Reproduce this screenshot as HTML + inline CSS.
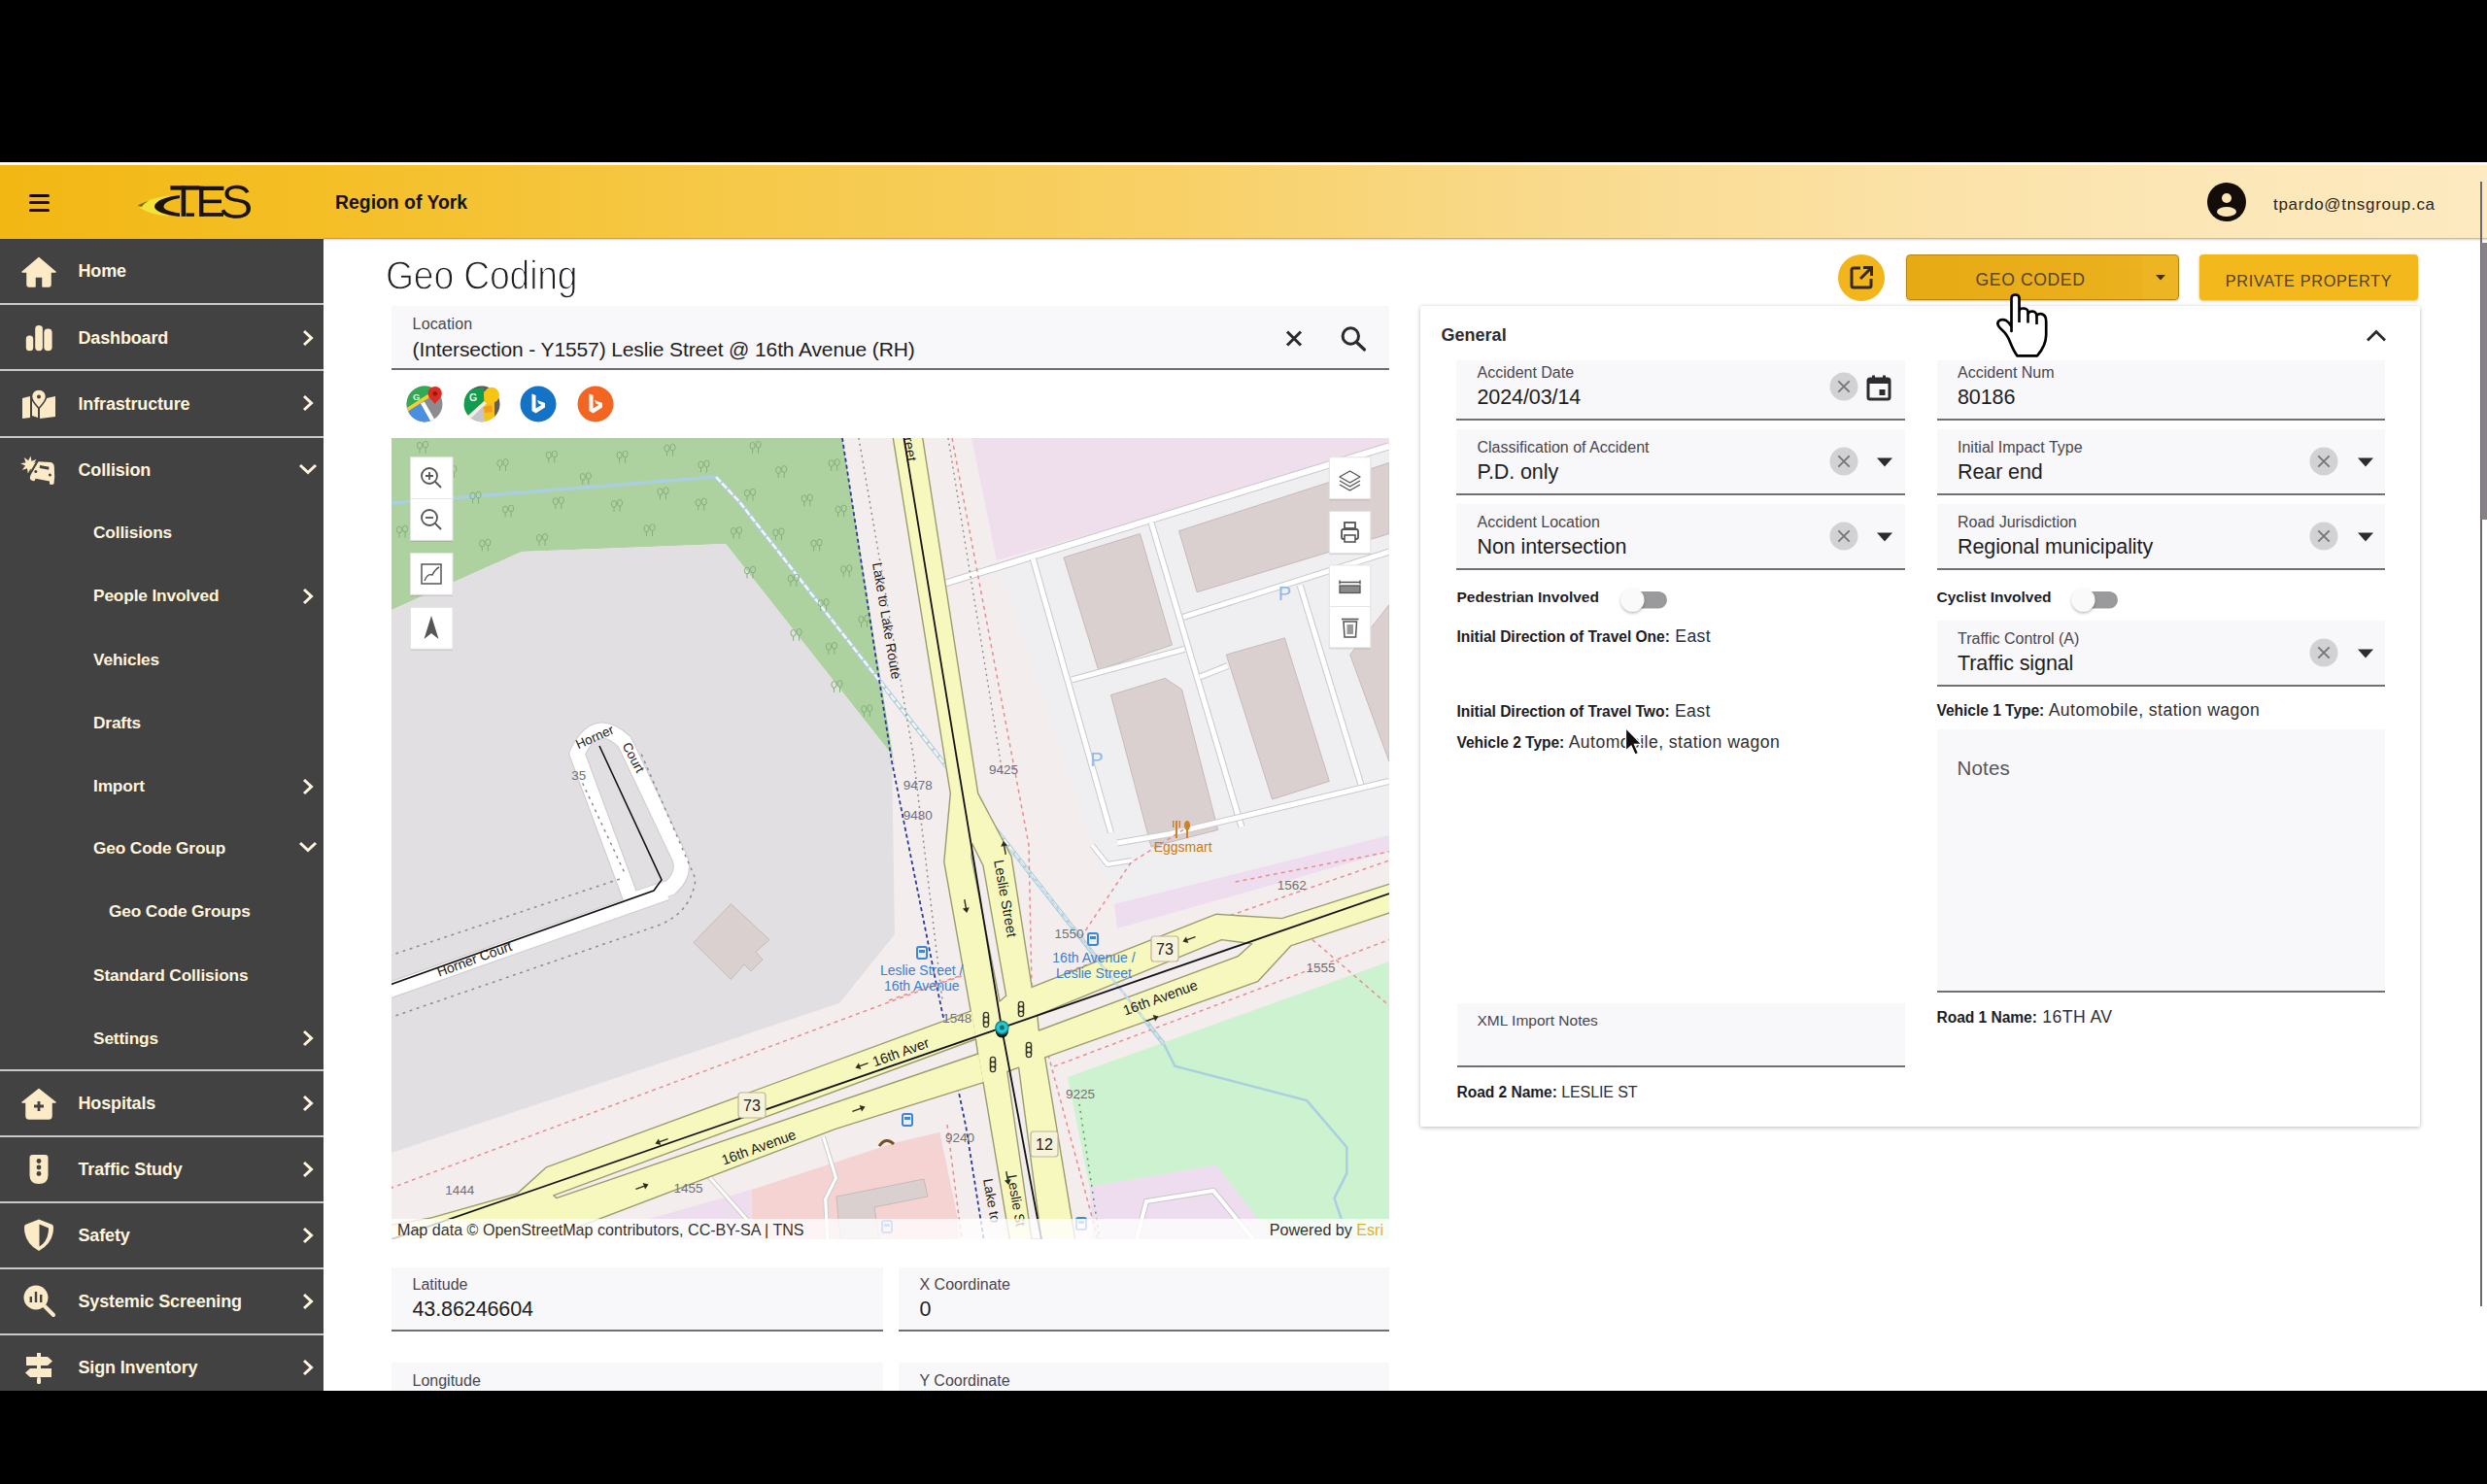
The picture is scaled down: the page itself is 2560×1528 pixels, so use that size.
<!DOCTYPE html>
<html><head><meta charset="utf-8"><title>Geo Coding</title>
<style>
html,body{margin:0;padding:0;}
body{width:2560px;height:1528px;background:#000;position:relative;overflow:hidden;font-family:"Liberation Sans", sans-serif;}
.t{position:absolute;white-space:nowrap;}
.b{position:absolute;}
</style></head><body>
<div class="b" style="left:0px;top:167px;width:2560px;height:3px;background:#fbfbfb"></div><div class="b" style="left:0px;top:170px;width:2560px;height:76px;background:linear-gradient(90deg,#F2B713 0%,#F4BE24 12%,#F6C94A 30%,#F8D066 47%,#F9DA8C 62%,#FBE2A8 78%,#FCE7B8 90%,#FDEAC0 100%);box-shadow:0 2px 3px rgba(0,0,0,0.25)"></div><div class="b" style="left:333px;top:246px;width:2227px;height:1186px;background:#ffffff"></div><div class="b" style="left:333px;top:245px;width:2227px;height:4px;background:linear-gradient(rgba(90,80,60,0.35),rgba(120,110,140,0.06) 70%,rgba(255,255,255,0))"></div><div class="b" style="left:29.5px;top:199.5px;width:21px;height:3px;background:#1a0a00;border-radius:2px"></div><div class="b" style="left:29.5px;top:207px;width:21px;height:3px;background:#1a0a00;border-radius:2px"></div><div class="b" style="left:29.5px;top:214.5px;width:21px;height:3px;background:#1a0a00;border-radius:2px"></div><svg class="b" style="left:138px;top:186px" width="124" height="44" viewBox="0 0 124 44">
<path d="M4 26 C12 20 26 16 40 15.5 C30 19 24 23 22 27 C22 31 28 34 38 36.5 C22 36 10 32 4 26 Z" fill="#F3E23A"/>
<path d="M3.5 26 C7 23.5 11 22 15 21 C11 23 9 25 8 27 Z" fill="#7a6a18"/>
<path d="M47 15 C33 16.5 22 20.5 21 26.5 C21 31 30 35 47 37 L47 33.5 C37 32 30.5 30 30.5 27 C30.5 23 37 19.5 47 18 Z" fill="#1a1410"/>
<rect x="37.4" y="5.2" width="30" height="4.4" fill="#1a1410"/>
<rect x="48.6" y="5.2" width="4.6" height="31.6" fill="#1a1410"/>
<rect x="53.5" y="33.4" width="8.5" height="3.4" fill="#1a1410"/>
<rect x="67" y="5.8" width="4.4" height="31" fill="#1a1410"/>
<rect x="67" y="5.8" width="25.4" height="4.2" fill="#1a1410"/>
<rect x="67" y="19.6" width="23" height="3.6" fill="#1a1410"/>
<rect x="67" y="33" width="25" height="3.8" fill="#1a1410"/>
<path d="M118.5 11.5 C116 6.5 111 4.8 105.5 4.8 C98 4.8 93.5 8.5 93.5 13.5 C93.5 19 98.5 20.8 105.5 21.8 C112 22.8 115.6 24.5 115.6 29 C115.6 33.5 111.5 35.3 105.5 35.3 C99 35.3 94.8 33.2 93 29.5 L89.6 31 C92 36.3 97.5 38.8 105.5 38.8 C114 38.8 120 35 120 28.8 C120 22 114.5 19.6 106.5 18.5 C100 17.6 97.5 16.4 97.5 13.2 C97.5 9.9 100.5 8.3 105.3 8.3 C110 8.3 113 9.8 115 13 Z" fill="#1a1410"/>
</svg><div class="t" style="left:345.0px;top:199.4px;font-size:19.4px;line-height:19.4px;font-weight:bold;color:#161210;">Region of York</div><svg class="b" style="left:2271px;top:187px" width="42" height="42" viewBox="0 0 42 42">
<circle cx="21" cy="21" r="20" fill="#140c08"/>
<circle cx="21" cy="17" r="5" fill="#FCE6B5"/>
<ellipse cx="21" cy="31" rx="10" ry="5" fill="#FCE6B5"/>
</svg><div class="t" style="left:2340.0px;top:202.1px;font-size:17px;line-height:17px;font-weight:normal;color:#2a2420;letter-spacing:0.69px">tpardo@tnsgroup.ca</div><div class="b" style="left:2553px;top:187px;width:2px;height:1158px;background:#6d6a6d"></div><div class="b" style="left:2554px;top:250px;width:6px;height:285px;background:#878187"></div><div class="b" style="left:0px;top:246px;width:333px;height:1186px;background:#424242"></div><div class="b" style="left:0px;top:312px;width:333px;height:2px;background:#c9c9c9"></div><div class="b" style="left:0px;top:380px;width:333px;height:2px;background:#c9c9c9"></div><div class="b" style="left:0px;top:449px;width:333px;height:2px;background:#c9c9c9"></div><div class="b" style="left:0px;top:1101px;width:333px;height:2px;background:#c9c9c9"></div><div class="b" style="left:0px;top:1169px;width:333px;height:2px;background:#c9c9c9"></div><div class="b" style="left:0px;top:1237px;width:333px;height:2px;background:#c9c9c9"></div><div class="b" style="left:0px;top:1305px;width:333px;height:2px;background:#c9c9c9"></div><div class="b" style="left:0px;top:1373px;width:333px;height:2px;background:#c9c9c9"></div><div class="t" style="left:80.5px;top:270.4px;font-size:18px;line-height:18px;font-weight:bold;color:#FFF5DC;letter-spacing:-0.15px">Home</div><div class="t" style="left:80.5px;top:339.4px;font-size:18px;line-height:18px;font-weight:bold;color:#FFF5DC;letter-spacing:-0.15px">Dashboard</div><div class="t" style="left:80.5px;top:406.7px;font-size:18px;line-height:18px;font-weight:bold;color:#FFF5DC;letter-spacing:-0.15px">Infrastructure</div><div class="t" style="left:80.5px;top:474.8px;font-size:18px;line-height:18px;font-weight:bold;color:#FFF5DC;letter-spacing:-0.15px">Collision</div><div class="t" style="left:80.5px;top:1127.4px;font-size:18px;line-height:18px;font-weight:bold;color:#FFF5DC;letter-spacing:-0.15px">Hospitals</div><div class="t" style="left:80.5px;top:1195.3px;font-size:18px;line-height:18px;font-weight:bold;color:#FFF5DC;letter-spacing:-0.15px">Traffic Study</div><div class="t" style="left:80.5px;top:1263.2px;font-size:18px;line-height:18px;font-weight:bold;color:#FFF5DC;letter-spacing:-0.15px">Safety</div><div class="t" style="left:80.5px;top:1331.0px;font-size:18px;line-height:18px;font-weight:bold;color:#FFF5DC;letter-spacing:-0.15px">Systemic Screening</div><div class="t" style="left:80.5px;top:1398.8px;font-size:18px;line-height:18px;font-weight:bold;color:#FFF5DC;letter-spacing:-0.15px">Sign Inventory</div><div class="t" style="left:96.0px;top:540.4px;font-size:17.3px;line-height:17.3px;font-weight:bold;color:#FFF5DC;letter-spacing:-0.15px">Collisions</div><div class="t" style="left:96.0px;top:605.4px;font-size:17.3px;line-height:17.3px;font-weight:bold;color:#FFF5DC;letter-spacing:-0.15px">People Involved</div><div class="t" style="left:96.0px;top:670.8px;font-size:17.3px;line-height:17.3px;font-weight:bold;color:#FFF5DC;letter-spacing:-0.15px">Vehicles</div><div class="t" style="left:96.0px;top:736.1px;font-size:17.3px;line-height:17.3px;font-weight:bold;color:#FFF5DC;letter-spacing:-0.15px">Drafts</div><div class="t" style="left:96.0px;top:801.4px;font-size:17.3px;line-height:17.3px;font-weight:bold;color:#FFF5DC;letter-spacing:-0.15px">Import</div><div class="t" style="left:96.0px;top:864.6px;font-size:17.3px;line-height:17.3px;font-weight:bold;color:#FFF5DC;letter-spacing:-0.15px">Geo Code Group</div><div class="t" style="left:112.0px;top:930.2px;font-size:17.3px;line-height:17.3px;font-weight:bold;color:#FFF5DC;letter-spacing:-0.15px">Geo Code Groups</div><div class="t" style="left:96.0px;top:996.0px;font-size:17.3px;line-height:17.3px;font-weight:bold;color:#FFF5DC;letter-spacing:-0.15px">Standard Collisions</div><div class="t" style="left:96.0px;top:1060.7px;font-size:17.3px;line-height:17.3px;font-weight:bold;color:#FFF5DC;letter-spacing:-0.15px">Settings</div><svg class="b" style="left:309px;top:338.1px" width="16" height="20" viewBox="0 0 16 20"><path d="M4 3 L11.5 10 L4 17" fill="none" stroke="#FFF5DC" stroke-width="3"/></svg><svg class="b" style="left:309px;top:405.4px" width="16" height="20" viewBox="0 0 16 20"><path d="M4 3 L11.5 10 L4 17" fill="none" stroke="#FFF5DC" stroke-width="3"/></svg><svg class="b" style="left:306px;top:475.0px" width="22" height="16" viewBox="0 0 22 16"><path d="M3 4 L11 11.5 L19 4" fill="none" stroke="#FFF5DC" stroke-width="3"/></svg><svg class="b" style="left:309px;top:1126.1px" width="16" height="20" viewBox="0 0 16 20"><path d="M4 3 L11.5 10 L4 17" fill="none" stroke="#FFF5DC" stroke-width="3"/></svg><svg class="b" style="left:309px;top:1194.0px" width="16" height="20" viewBox="0 0 16 20"><path d="M4 3 L11.5 10 L4 17" fill="none" stroke="#FFF5DC" stroke-width="3"/></svg><svg class="b" style="left:309px;top:1261.9px" width="16" height="20" viewBox="0 0 16 20"><path d="M4 3 L11.5 10 L4 17" fill="none" stroke="#FFF5DC" stroke-width="3"/></svg><svg class="b" style="left:309px;top:1329.7px" width="16" height="20" viewBox="0 0 16 20"><path d="M4 3 L11.5 10 L4 17" fill="none" stroke="#FFF5DC" stroke-width="3"/></svg><svg class="b" style="left:309px;top:1397.5px" width="16" height="20" viewBox="0 0 16 20"><path d="M4 3 L11.5 10 L4 17" fill="none" stroke="#FFF5DC" stroke-width="3"/></svg><svg class="b" style="left:309px;top:603.5px" width="16" height="20" viewBox="0 0 16 20"><path d="M4 3 L11.5 10 L4 17" fill="none" stroke="#FFF5DC" stroke-width="3"/></svg><svg class="b" style="left:309px;top:799.5px" width="16" height="20" viewBox="0 0 16 20"><path d="M4 3 L11.5 10 L4 17" fill="none" stroke="#FFF5DC" stroke-width="3"/></svg><svg class="b" style="left:306px;top:864.2px" width="22" height="16" viewBox="0 0 22 16"><path d="M3 4 L11 11.5 L19 4" fill="none" stroke="#FFF5DC" stroke-width="3"/></svg><svg class="b" style="left:309px;top:1058.8px" width="16" height="20" viewBox="0 0 16 20"><path d="M4 3 L11.5 10 L4 17" fill="none" stroke="#FFF5DC" stroke-width="3"/></svg><svg class="b" style="left:22px;top:264px" width="36" height="32" viewBox="0 0 36 32"><path d="M18 1.5 L35 16 L30 16 L30 29 Q30 31 28 31 L22 31 L22 21 L14 21 L14 31 L8 31 Q6 31 6 29 L6 16 L1 16 Z" fill="#FCEBC6" stroke="#FCEBC6" stroke-width="1.5" stroke-linejoin="round"/></svg><svg class="b" style="left:26px;top:334px" width="29" height="28" viewBox="0 0 29 28"><rect x="0.8" y="11.6" width="7.4" height="15.6" rx="3.5" fill="#FCEBC6"/><rect x="10.2" y="1" width="7.7" height="26.2" rx="3.7" fill="#FCEBC6"/><rect x="19.3" y="4.6" width="8.3" height="22.6" rx="3.9" fill="#FCEBC6"/></svg><svg class="b" style="left:22px;top:400px" width="36" height="32" viewBox="0 0 36 32"><path d="M1 10 L9 8 L9 30 L1 31 Z" fill="#FCEBC6"/>
<path d="M11 10 L17 12 L17 30 L11 28 Z" fill="#FCEBC6"/>
<path d="M19 12 L26 10 L35 8 L35 29 L19 31 Z" fill="#FCEBC6"/>
<path d="M18 1 C13 1 10.5 4.5 10.5 8.5 C10.5 13 16 18 18 20.5 C20 18 25.5 13 25.5 8.5 C25.5 4.5 23 1 18 1 Z" fill="#FCEBC6" stroke="#424242" stroke-width="1.6"/>
<circle cx="18" cy="8.5" r="2" fill="#424242"/></svg><svg class="b" style="left:20px;top:467px" width="38" height="34" viewBox="0 0 38 34"><path d="M11.57,2.40 L12.42,7.82 L17.60,6.04 L14.37,10.47 L19.30,12.87 L13.88,13.72 L15.66,18.90 L11.23,15.67 L8.83,20.60 L7.98,15.18 L2.80,16.96 L6.03,12.53 L1.10,10.13 L6.52,9.28 L4.74,4.10 L9.17,7.33 Z" fill="#FCEBC6"/>
<path d="M12,15 Q13,8.5 19.5,8.2 L32,9 Q35.6,9.5 35.8,13.5 L36.2,24 L35.5,31 Q35,32.2 33,32 L31,31.6 L31,28.5 L16.5,25.8 L16,27.5 Q15.5,28.5 13.5,28 L11.5,27 Q10.5,26 11,24 Z" fill="#FCEBC6"/>
<path d="M20,5.5 L10,22.5" stroke="#424242" stroke-width="2.2"/>
<path d="M21,12 L30.5,13.8 L30.2,16.8 L20.8,15 Z" fill="#424242"/>
<circle cx="16.8" cy="18.5" r="1.5" fill="#424242"/><circle cx="31.4" cy="22.1" r="1.5" fill="#424242"/></svg><svg class="b" style="left:22px;top:1120px" width="36" height="34" viewBox="0 0 36 34"><path d="M18 1.5 L35 15 L31 15 L31 29 Q31 32 28 32 L8 32 Q5 32 5 29 L5 15 L1 15 Z" fill="#FCEBC6" stroke="#FCEBC6" stroke-width="1.5" stroke-linejoin="round"/>
<path d="M18 14 L18 24 M13 19 L23 19" stroke="#424242" stroke-width="2.8"/></svg><svg class="b" style="left:29px;top:1188px" width="22" height="33" viewBox="0 0 22 33"><path d="M1.5 4 Q1.5 1 4.5 1 L17.5 1 Q20.5 1 20.5 4 L20.5 22 Q20.5 31 11 31 Q1.5 31 1.5 22 Z" fill="#FCEBC6"/>
<circle cx="11" cy="7.5" r="2.4" fill="#424242"/><circle cx="11" cy="14" r="2.4" fill="#424242"/><circle cx="11" cy="20.5" r="2.4" fill="#424242"/></svg><svg class="b" style="left:23px;top:1254px" width="34" height="36" viewBox="0 0 34 36"><path d="M17 1.5 L31 7 Q32 8 32 10 Q32 26 17 34 Q2 26 2 10 Q2 8 3 7 Z" fill="#FCEBC6"/>
<path d="M17.5 6.5 L27 10.5 Q27 24 17.5 29.5 Z" fill="#424242"/></svg><svg class="b" style="left:22px;top:1321px" width="36" height="37" viewBox="0 0 36 37"><circle cx="15" cy="15" r="12.5" fill="#FCEBC6"/>
<path d="M24 24 L33 33" stroke="#FCEBC6" stroke-width="4" stroke-linecap="round"/>
<rect x="8.6" y="14" width="2.4" height="6" fill="#424242"/><rect x="13.8" y="9" width="2.4" height="11" fill="#424242"/><rect x="19" y="12" width="2.4" height="8" fill="#424242"/></svg><svg class="b" style="left:24px;top:1392px" width="32" height="34" viewBox="0 0 32 34"><path d="M3 5 L25 5 L30 9.5 L25 14 L3 14 Z" fill="#FCEBC6"/>
<path d="M29 17 L7 17 L2 21.5 L7 26 L29 26 Z" fill="#FCEBC6"/>
<rect x="14" y="1" width="4" height="4" fill="#FCEBC6"/><rect x="14" y="14" width="4" height="3" fill="#FCEBC6"/><rect x="14" y="26" width="4" height="7" rx="1.5" fill="#FCEBC6"/></svg><div class="t" style="left:396.5px;top:261.6px;font-size:43px;line-height:43px;font-weight:normal;color:#1f2024;letter-spacing:-0.2px;transform:scaleX(0.868);transform-origin:0 0;-webkit-text-stroke:1.3px #ffffff">Geo Coding</div><div class="b" style="left:403px;top:315px;width:1027px;height:64px;background:#F8F7FA"></div><div class="b" style="left:403px;top:379px;width:1027px;height:2px;background:#6f6b70"></div><div class="t" style="left:424.6px;top:325.8px;font-size:16px;line-height:16px;font-weight:normal;color:#48464c;letter-spacing:0.15px">Location</div><div class="t" style="left:424.6px;top:348.5px;font-size:21px;line-height:21px;font-weight:normal;color:#1e1e22;letter-spacing:-0.12px">(Intersection - Y1557) Leslie Street @ 16th Avenue (RH)</div><svg class="b" style="left:1322px;top:339px" width="20" height="20" viewBox="0 0 20 20"><path d="M3 2.5 L17 16.5 M17 2.5 L3 16.5" stroke="#2a2a2e" stroke-width="3"/></svg><svg class="b" style="left:1378px;top:334px" width="30" height="29" viewBox="0 0 30 29"><circle cx="12.3" cy="12" r="8.2" fill="none" stroke="#2a2a2e" stroke-width="3"/><path d="M18.5 18.5 L26.5 26" stroke="#2a2a2e" stroke-width="3.2" stroke-linecap="round"/></svg><svg class="b" style="left:418px;top:397px" width="38" height="38" viewBox="0 0 38 38">
<defs><clipPath id="c437"><circle cx="19" cy="19" r="18.5"/></clipPath></defs>
<g clip-path="url(#c437)">
<rect x="0" y="0" width="38" height="38" fill="#8d8b92"/>
<path d="M0 0 L30 0 L23 9.5 L0 25 Z" fill="#34a853"/>
<path d="M0 23.5 L23 8.5 L23.5 12.5 L0 28 Z" fill="#f2cf2c"/>
<path d="M0 28 L17 17.5 L28 38 L0 38 Z" fill="#4a8fe0"/>
<path d="M15 18.5 L18.8 16.5 L30 36 L26 38 Z" fill="#ffffff"/>
</g>
<text x="7" y="14.5" font-family="Liberation Sans" font-weight="bold" font-size="9.5" fill="#d9f7e5">G</text>
<path d="M30 1 C25.8 1 22.5 4.2 22.5 8.3 C22.5 12.5 27.5 16 29.8 19 C32 16 36.8 12.5 36.8 8.3 C36.8 4.2 34 1 30 1 Z" fill="#dd2c22"/>
<circle cx="29.8" cy="8.3" r="2.4" fill="#9b1510"/>
</svg><svg class="b" style="left:477px;top:397px" width="38" height="38" viewBox="0 0 38 38">
<defs><clipPath id="d496"><circle cx="19" cy="19" r="18.5"/></clipPath></defs>
<g clip-path="url(#d496)">
<rect x="0" y="0" width="38" height="38" fill="#f6c21a"/>
<rect x="0" y="0" width="38" height="6" fill="#5a5a60"/>
<rect x="32" y="12" width="6" height="20" fill="#5e5c66"/>
<path d="M0 22 L2 5 L21 1.8 L21.3 16 L4.5 31 L0 33 Z" fill="#139b51"/>
<path d="M5 31 L21.5 16 L24 18.5 L8 33.5 Z" fill="#efeff2"/>
<path d="M8 34 L20 22 L22 38 L6 38 Z" fill="#c7c5cc"/>
<path d="M21 22 L29 20 L30 27 L22 28 Z" fill="#f59a22"/>
</g>
<circle cx="29" cy="9.8" r="8" fill="#f8c512"/>
<text x="6" y="16" font-family="Liberation Sans" font-weight="bold" font-size="10.5" fill="#e6fbef">G</text>
</svg><svg class="b" style="left:535px;top:397px" width="38" height="38" viewBox="0 0 38 38">
<circle cx="19" cy="19" r="18.5" fill="#1573c7"/>
<path d="M12.5 8.5 L16.5 10 L16.5 23.5 L22.5 20 L19.5 18.5 L18 15 L26 18 L26 22.5 L16.5 28.5 L12.5 26 Z" fill="#ffffff"/>
</svg><svg class="b" style="left:594px;top:397px" width="38" height="38" viewBox="0 0 38 38">
<circle cx="19" cy="19" r="18.5" fill="#f26522"/>
<path d="M12.5 8.5 L16.5 10 L16.5 23.5 L22.5 20 L19.5 18.5 L18 15 L26 18 L26 22.5 L16.5 28.5 L12.5 26 Z" fill="#ffffff"/>
</svg><div class="b" style="left:403px;top:1305px;width:506px;height:64px;background:#F8F7FA"></div><div class="b" style="left:403px;top:1369px;width:506px;height:2px;background:#707070"></div><div class="t" style="left:424.5px;top:1315.0px;font-size:16px;line-height:16px;font-weight:normal;color:#48464c;">Latitude</div><div class="t" style="left:424.5px;top:1337.5px;font-size:21.5px;line-height:21.5px;font-weight:normal;color:#1e1e22;letter-spacing:-0.1px">43.86246604</div><div class="b" style="left:925px;top:1305px;width:505px;height:64px;background:#F8F7FA"></div><div class="b" style="left:925px;top:1369px;width:505px;height:2px;background:#707070"></div><div class="t" style="left:946.5px;top:1315.0px;font-size:16px;line-height:16px;font-weight:normal;color:#48464c;">X Coordinate</div><div class="t" style="left:946.5px;top:1337.5px;font-size:21.5px;line-height:21.5px;font-weight:normal;color:#1e1e22;letter-spacing:-0.1px">0</div><div class="b" style="left:403px;top:1403px;width:506px;height:29px;background:#F8F7FA"></div><div class="b" style="left:925px;top:1403px;width:505px;height:29px;background:#F8F7FA"></div><div class="t" style="left:424.5px;top:1414.1px;font-size:16px;line-height:16px;font-weight:normal;color:#48464c;">Longitude</div><div class="t" style="left:946.5px;top:1414.1px;font-size:16px;line-height:16px;font-weight:normal;color:#48464c;">Y Coordinate</div><svg class="b" style="left:1891px;top:261px" width="50" height="50" viewBox="0 0 50 50">
<circle cx="25" cy="25" r="24" fill="#F2B61C"/>
<path d="M24 15 L17 15 Q15 15 15 17 L15 33 Q15 35 17 35 L33 35 Q35 35 35 33 L35 26" fill="none" stroke="#33291a" stroke-width="3"/>
<path d="M24 26 L35 15 M27 14.5 L35.5 14.5 L35.5 23" fill="none" stroke="#33291a" stroke-width="3"/>
</svg><div class="b" style="left:1961.5px;top:262px;width:281px;height:47px;background:linear-gradient(90deg,#E6AA14,#EBB11E 85%);border:1px solid #b8860e;border-radius:4px;box-sizing:border-box;box-shadow:0 1px 2px rgba(0,0,0,0.25)"></div><div class="b" style="left:2206px;top:263px;width:35px;height:45px;background:#EDB524;border-radius:0 3px 3px 0"></div><svg class="b" style="left:2217px;top:282px" width="14" height="8" viewBox="0 0 14 8"><path d="M2 1 L12 1 L7 6.5 Z" fill="#3a2e1a"/></svg><div class="t" style="left:1590.0px;width:1000px;text-align:center;top:279.9px;font-size:17.6px;line-height:17.6px;font-weight:normal;color:#54442a;letter-spacing:0.6px">GEO CODED</div><div class="b" style="left:2263.5px;top:262px;width:225.5px;height:47px;background:#F2B81C;border-radius:4px;box-shadow:0 1px 3px rgba(0,0,0,0.25)"></div><div class="t" style="left:1876.5px;width:1000px;text-align:center;top:281.0px;font-size:16.3px;line-height:16.3px;font-weight:normal;color:#4f4026;letter-spacing:0.65px">PRIVATE PROPERTY</div><div class="b" style="left:1462px;top:315px;width:1029px;height:845px;background:#fff;box-shadow:0 1px 4px rgba(0,0,0,0.28);border-radius:2px"></div><div class="t" style="left:1483.6px;top:335.6px;font-size:18px;line-height:18px;font-weight:bold;color:#2a2c36;">General</div><svg class="b" style="left:2434px;top:336px" width="24" height="18" viewBox="0 0 24 18"><path d="M3 14.5 L12 5.5 L21 14.5" fill="none" stroke="#2a2a2e" stroke-width="2.8"/></svg><div class="b" style="left:1499px;top:371px;width:462px;height:60px;background:#F8F7FA"></div><div class="b" style="left:1499px;top:431px;width:462px;height:2px;background:#707070"></div><div class="t" style="left:1520.5px;top:375.7px;font-size:16px;line-height:16px;font-weight:normal;color:#48464c;">Accident Date</div><div class="t" style="left:1520.5px;top:398.6px;font-size:21.5px;line-height:21.5px;font-weight:normal;color:#1e1e22;letter-spacing:-0.1px">2024/03/14</div><svg class="b" style="left:1882.5px;top:383.3px" width="30" height="30" viewBox="0 0 30 30"><circle cx="15" cy="15" r="14.5" fill="#d2d1d4"/><path d="M9.3 9.3 L20.7 20.7 M20.7 9.3 L9.3 20.7" stroke="#77767a" stroke-width="1.9"/></svg><svg class="b" style="left:1921px;top:385px" width="26" height="28" viewBox="0 0 26 28">
<rect x="2" y="5" width="22" height="21" rx="2" fill="none" stroke="#2c2c30" stroke-width="3"/>
<rect x="2" y="5" width="22" height="5" fill="#2c2c30"/>
<rect x="6" y="1.5" width="3" height="5" fill="#2c2c30"/><rect x="17" y="1.5" width="3" height="5" fill="#2c2c30"/>
<rect x="13.5" y="16" width="6" height="6" fill="#2c2c30"/></svg><div class="b" style="left:1499px;top:442px;width:462px;height:66px;background:#F8F7FA"></div><div class="b" style="left:1499px;top:508px;width:462px;height:2px;background:#707070"></div><div class="t" style="left:1520.5px;top:452.7px;font-size:16px;line-height:16px;font-weight:normal;color:#48464c;">Classification of Accident</div><div class="t" style="left:1520.5px;top:475.6px;font-size:21.5px;line-height:21.5px;font-weight:normal;color:#1e1e22;letter-spacing:-0.1px">P.D. only</div><svg class="b" style="left:1882.5px;top:460.3px" width="30" height="30" viewBox="0 0 30 30"><circle cx="15" cy="15" r="14.5" fill="#d2d1d4"/><path d="M9.3 9.3 L20.7 20.7 M20.7 9.3 L9.3 20.7" stroke="#77767a" stroke-width="1.9"/></svg><svg class="b" style="left:1931.0px;top:470.0px" width="18" height="12" viewBox="0 0 18 12"><path d="M1 1.5 L17 1.5 L9 10.5 Z" fill="#2c2c30"/></svg><div class="b" style="left:1499px;top:519px;width:462px;height:66px;background:#F8F7FA"></div><div class="b" style="left:1499px;top:585px;width:462px;height:2px;background:#707070"></div><div class="t" style="left:1520.5px;top:529.7px;font-size:16px;line-height:16px;font-weight:normal;color:#48464c;">Accident Location</div><div class="t" style="left:1520.5px;top:552.6px;font-size:21.5px;line-height:21.5px;font-weight:normal;color:#1e1e22;letter-spacing:-0.1px">Non intersection</div><svg class="b" style="left:1882.5px;top:537.3px" width="30" height="30" viewBox="0 0 30 30"><circle cx="15" cy="15" r="14.5" fill="#d2d1d4"/><path d="M9.3 9.3 L20.7 20.7 M20.7 9.3 L9.3 20.7" stroke="#77767a" stroke-width="1.9"/></svg><svg class="b" style="left:1931.0px;top:547.0px" width="18" height="12" viewBox="0 0 18 12"><path d="M1 1.5 L17 1.5 L9 10.5 Z" fill="#2c2c30"/></svg><div class="b" style="left:1993.5px;top:371px;width:461px;height:60px;background:#F8F7FA"></div><div class="b" style="left:1993.5px;top:431px;width:461px;height:2px;background:#707070"></div><div class="t" style="left:2015.0px;top:375.7px;font-size:16px;line-height:16px;font-weight:normal;color:#48464c;">Accident Num</div><div class="t" style="left:2015.0px;top:398.6px;font-size:21.5px;line-height:21.5px;font-weight:normal;color:#1e1e22;letter-spacing:-0.1px">80186</div><div class="b" style="left:1993.5px;top:442px;width:461px;height:66px;background:#F8F7FA"></div><div class="b" style="left:1993.5px;top:508px;width:461px;height:2px;background:#707070"></div><div class="t" style="left:2015.0px;top:452.7px;font-size:16px;line-height:16px;font-weight:normal;color:#48464c;">Initial Impact Type</div><div class="t" style="left:2015.0px;top:475.6px;font-size:21.5px;line-height:21.5px;font-weight:normal;color:#1e1e22;letter-spacing:-0.1px">Rear end</div><svg class="b" style="left:2377.0px;top:460.3px" width="30" height="30" viewBox="0 0 30 30"><circle cx="15" cy="15" r="14.5" fill="#d2d1d4"/><path d="M9.3 9.3 L20.7 20.7 M20.7 9.3 L9.3 20.7" stroke="#77767a" stroke-width="1.9"/></svg><svg class="b" style="left:2425.5px;top:470.0px" width="18" height="12" viewBox="0 0 18 12"><path d="M1 1.5 L17 1.5 L9 10.5 Z" fill="#2c2c30"/></svg><div class="b" style="left:1993.5px;top:519px;width:461px;height:66px;background:#F8F7FA"></div><div class="b" style="left:1993.5px;top:585px;width:461px;height:2px;background:#707070"></div><div class="t" style="left:2015.0px;top:529.7px;font-size:16px;line-height:16px;font-weight:normal;color:#48464c;">Road Jurisdiction</div><div class="t" style="left:2015.0px;top:552.6px;font-size:21.5px;line-height:21.5px;font-weight:normal;color:#1e1e22;letter-spacing:-0.1px">Regional municipality</div><svg class="b" style="left:2377.0px;top:537.3px" width="30" height="30" viewBox="0 0 30 30"><circle cx="15" cy="15" r="14.5" fill="#d2d1d4"/><path d="M9.3 9.3 L20.7 20.7 M20.7 9.3 L9.3 20.7" stroke="#77767a" stroke-width="1.9"/></svg><svg class="b" style="left:2425.5px;top:547.0px" width="18" height="12" viewBox="0 0 18 12"><path d="M1 1.5 L17 1.5 L9 10.5 Z" fill="#2c2c30"/></svg><div class="b" style="left:1993.5px;top:639px;width:461px;height:66px;background:#F8F7FA"></div><div class="b" style="left:1993.5px;top:705px;width:461px;height:2px;background:#707070"></div><div class="t" style="left:2015.0px;top:649.7px;font-size:16px;line-height:16px;font-weight:normal;color:#48464c;">Traffic Control (A)</div><div class="t" style="left:2015.0px;top:672.6px;font-size:21.5px;line-height:21.5px;font-weight:normal;color:#1e1e22;letter-spacing:-0.1px">Traffic signal</div><svg class="b" style="left:2377.0px;top:657.3px" width="30" height="30" viewBox="0 0 30 30"><circle cx="15" cy="15" r="14.5" fill="#d2d1d4"/><path d="M9.3 9.3 L20.7 20.7 M20.7 9.3 L9.3 20.7" stroke="#77767a" stroke-width="1.9"/></svg><svg class="b" style="left:2425.5px;top:667.0px" width="18" height="12" viewBox="0 0 18 12"><path d="M1 1.5 L17 1.5 L9 10.5 Z" fill="#2c2c30"/></svg><div class="t" style="left:1499.5px;top:606.9px;font-size:15.5px;line-height:15.5px;font-weight:bold;color:#1c1d26">Pedestrian Involved</div><svg class="b" style="left:1660px;top:600.5px" width="66" height="34" viewBox="0 0 66 34">
<defs><filter id="sh1668" x="-50%" y="-50%" width="200%" height="200%"><feDropShadow dx="0" dy="1.5" stdDeviation="1.5" flood-opacity="0.3"/></filter></defs>
<rect x="14" y="8" width="42" height="17.5" rx="8.75" fill="#9a999c"/>
<circle cx="20.5" cy="16.8" r="12" fill="#fafafa" filter="url(#sh1668)"/>
</svg><div class="t" style="left:1993.5px;top:606.9px;font-size:15.5px;line-height:15.5px;font-weight:bold;color:#1c1d26">Cyclist Involved</div><svg class="b" style="left:2123.5px;top:600.5px" width="66" height="34" viewBox="0 0 66 34">
<defs><filter id="sh2131.5" x="-50%" y="-50%" width="200%" height="200%"><feDropShadow dx="0" dy="1.5" stdDeviation="1.5" flood-opacity="0.3"/></filter></defs>
<rect x="14" y="8" width="42" height="17.5" rx="8.75" fill="#9a999c"/>
<circle cx="20.5" cy="16.8" r="12" fill="#fafafa" filter="url(#sh2131.5)"/>
</svg><div class="t" style="left:1499.5px;top:646.5px;font-size:16px;line-height:16px;color:#1c1d26"><b style="font-size:15.6px;letter-spacing:-0.05px">Initial Direction of Travel One:</b><span style="font-size:17.6px;letter-spacing:0.45px;color:#2e2e33"> East</span></div><div class="t" style="left:1499.5px;top:723.5px;font-size:16px;line-height:16px;color:#1c1d26"><b style="font-size:15.6px;letter-spacing:-0.05px">Initial Direction of Travel Two:</b><span style="font-size:17.6px;letter-spacing:0.45px;color:#2e2e33"> East</span></div><div class="t" style="left:1499.5px;top:755.5px;font-size:16px;line-height:16px;color:#1c1d26"><b style="font-size:15.6px;letter-spacing:-0.05px">Vehicle 2 Type:</b><span style="font-size:17.6px;letter-spacing:0.45px;color:#2e2e33"> Automobile, station wagon</span></div><div class="t" style="left:1993.5px;top:723.1px;font-size:16px;line-height:16px;color:#1c1d26"><b style="font-size:15.6px;letter-spacing:-0.05px">Vehicle 1 Type:</b><span style="font-size:17.6px;letter-spacing:0.45px;color:#2e2e33"> Automobile, station wagon</span></div><div class="b" style="left:1993.5px;top:751px;width:461px;height:269px;background:#F8F7FA"></div><div class="b" style="left:1993.5px;top:1020px;width:461px;height:2px;background:#707070"></div><div class="t" style="left:2014.5px;top:780.6px;font-size:20.5px;line-height:20.5px;font-weight:normal;color:#55545a;letter-spacing:0.2px">Notes</div><div class="t" style="left:1993.5px;top:1038.5px;font-size:16px;line-height:16px;color:#1c1d26"><b style="font-size:15.6px;letter-spacing:-0.05px">Road 1 Name:</b><span style="font-size:17.6px;letter-spacing:0.45px;color:#2e2e33"> 16TH AV</span></div><div class="b" style="left:1499.5px;top:1033px;width:461.5px;height:64px;background:#F8F7FA"></div><div class="b" style="left:1499.5px;top:1097px;width:461.5px;height:2px;background:#707070"></div><div class="t" style="left:1520.5px;top:1042.9px;font-size:15.5px;line-height:15.5px;font-weight:normal;color:#48464c;">XML Import Notes</div><div class="t" style="left:1499.5px;top:1116.5px;font-size:16px;line-height:16px;color:#1c1d26"><b style="font-size:15.6px;letter-spacing:-0.05px">Road 2 Name:</b><span style="font-size:16px;letter-spacing:-0.1px;color:#2e2e33"> LESLIE ST</span></div><svg class="b" style="left:2050px;top:298px" width="62" height="72" viewBox="2050 298 62 72">
<path d="M2070.5,341 L2070.5,307 Q2070.5,303.5 2074.5,303.5 Q2078.5,303.5 2078.5,307 L2078.5,320 Q2079,317.5 2082.5,317.5 Q2087,317.5 2087.5,321 L2087.5,323 Q2088.5,320.5 2092,320.5 Q2096,321 2096.5,325 Q2098,323 2101,323.2 Q2106.2,324 2106.2,331 L2106.2,345 Q2106,356 2097,366.3 L2076.5,366.3 Q2073,362 2069,352 Q2066,344 2060,339 Q2055,334.5 2057,331 Q2060,328 2065,330 Q2068,332 2070.5,336 Z" fill="#fff" stroke="#000" stroke-width="2.7" stroke-linejoin="round"/>
<path d="M2078.5,320 L2078.5,332 M2087.5,323 L2087.5,332.5 M2096.5,325 L2096.5,334" stroke="#000" stroke-width="2.6"/>
</svg><svg class="b" style="left:1672px;top:748px" width="24" height="34" viewBox="0 0 24 34">
<path d="M1.5 1.5 L1.5 25 L7 20 L11 29 L14.5 27.5 L10.5 18.5 L18 18.5 Z" fill="#111" stroke="#fff" stroke-width="1.3"/>
</svg><svg class="b" style="left:403px;top:451px" width="1027" height="825" viewBox="403 451 1027 825"><rect x="403" y="451" width="1027" height="825" fill="#F4EDED"/><polygon points="403,451 867,451 921,790 918,777 747,560 537,568 403,628" fill="#ADD19F"/><polygon points="403,628 537,568 747,560 918,777 921,962 864,1033 403,1187" fill="#E1DFE1"/><polygon points="1000,451 1430,451 1430,462 1026,577" fill="#EFDEEC"/><polygon points="971,601 1430,459 1430,860 1150,938 1124,870 1032,591" fill="#EFEEF0"/><polygon points="1032,591 1430,470 1430,862 1147,932" fill="#EFEEF0"/><polygon points="1147,931 1430,860 1430,877 1150,956" fill="#EEDDEE"/><polygon points="1095,574 1173.5,549.5 1206.5,664 1130.6,689.8" fill="#D9D0CF" stroke="#C6BAB8" stroke-width="1"/><polygon points="1213.6,546.7 1430,476.5 1430,549.5 1232.2,609.7" fill="#D9D0CF" stroke="#C6BAB8" stroke-width="1"/><polygon points="1143.5,715.6 1199.3,698.4 1216.5,709.9 1253.7,854.5 1185,872 1150,740" fill="#D9D0CF" stroke="#C6BAB8" stroke-width="1"/><polygon points="1262.3,674.1 1322.4,656.9 1368.3,804.4 1309.6,823" fill="#D9D0CF" stroke="#C6BAB8" stroke-width="1"/><polygon points="1389.7,674.1 1430,622.5 1430,784.3" fill="#D9D0CF" stroke="#C6BAB8" stroke-width="1"/><path d="M971.6,601 L1429.8,459.3" fill="none" stroke="#C9C7CB" stroke-width="8" stroke-linejoin="round"/><path d="M971.6,601 L1429.8,459.3" fill="none" stroke="#FFFFFF" stroke-width="6" stroke-linejoin="round"/><path d="M1063.3,575.3 L1143.5,857.4" fill="none" stroke="#C9C7CB" stroke-width="7" stroke-linejoin="round"/><path d="M1063.3,575.3 L1143.5,857.4" fill="none" stroke="#FFFFFF" stroke-width="5" stroke-linejoin="round"/><path d="M1185,538 L1278,851.6" fill="none" stroke="#C9C7CB" stroke-width="7" stroke-linejoin="round"/><path d="M1185,538 L1278,851.6" fill="none" stroke="#FFFFFF" stroke-width="5" stroke-linejoin="round"/><path d="M1338.2,602.5 L1401.2,808.7" fill="none" stroke="#C9C7CB" stroke-width="7" stroke-linejoin="round"/><path d="M1338.2,602.5 L1401.2,808.7" fill="none" stroke="#FFFFFF" stroke-width="5" stroke-linejoin="round"/><path d="M1103.4,699.9 L1219.3,668.4" fill="none" stroke="#C9C7CB" stroke-width="7" stroke-linejoin="round"/><path d="M1103.4,699.9 L1219.3,668.4" fill="none" stroke="#FFFFFF" stroke-width="5" stroke-linejoin="round"/><path d="M1217.9,635.4 L1429.8,568.1" fill="none" stroke="#C9C7CB" stroke-width="7" stroke-linejoin="round"/><path d="M1217.9,635.4 L1429.8,568.1" fill="none" stroke="#FFFFFF" stroke-width="5" stroke-linejoin="round"/><path d="M1235.1,697 L1263.7,685.6" fill="none" stroke="#C9C7CB" stroke-width="7" stroke-linejoin="round"/><path d="M1235.1,697 L1263.7,685.6" fill="none" stroke="#FFFFFF" stroke-width="5" stroke-linejoin="round"/><path d="M1150,868 L1203.6,858.8 L1429.8,804.4" fill="none" stroke="#C9C7CB" stroke-width="7" stroke-linejoin="round"/><path d="M1150,868 L1203.6,858.8 L1429.8,804.4" fill="none" stroke="#FFFFFF" stroke-width="5" stroke-linejoin="round"/><path d="M1124,870 L1140,890 L1165,886" fill="none" stroke="#C9C7CB" stroke-width="6" stroke-linejoin="round"/><path d="M1124,870 L1140,890 L1165,886" fill="none" stroke="#FFFFFF" stroke-width="4" stroke-linejoin="round"/><polygon points="1099,1109 1430,990 1430,1276 1311,1276 1251.8,1199.7 1121.6,1222" fill="#CDF2CF"/><polygon points="1121.6,1222 1251.8,1199.7 1311,1276 1125,1276" fill="#EEDDEE"/><path d="M1170,1276 L1180,1237 L1249,1226 L1290,1276" fill="none" stroke="#C9C7CB" stroke-width="6"/><path d="M1170,1276 L1180,1237 L1249,1226 L1290,1276" fill="none" stroke="#fff" stroke-width="4"/><polygon points="773.6,1225 920,1177 967.4,1165.7 985.8,1254.8 987,1276 773.6,1276" fill="#F5D3D2"/><polygon points="660,1276 668.9,1254.8 773.6,1225 773.6,1276" fill="#EEDDEE"/><polygon points="861,1232 951,1214 955,1232 900,1243 905,1276 865,1276" fill="#D9D0CF" stroke="#C6BAB8" stroke-width="1"/><path d="M730,1211.8 L769.3,1256.3 L780,1276" fill="none" stroke="#ccc" stroke-width="5"/><path d="M730,1211.8 L769.3,1256.3 L780,1276" fill="none" stroke="#fff" stroke-width="3"/><path d="M847.5,1170.6 L860.5,1212.9 L849.7,1234.6 L851.8,1276" fill="none" stroke="#ccc" stroke-width="5"/><path d="M847.5,1170.6 L860.5,1212.9 L849.7,1234.6 L851.8,1276" fill="none" stroke="#fff" stroke-width="3"/><path d="M1198,1075 L1209.4,1097.8 L1345.2,1133.1 L1386.3,1181.3 L1386.3,1208.1 L1373.5,1233.6 L1387.7,1276" fill="none" stroke="#A9CFE0" stroke-width="2.5"/><path d="M403,518 L737,491" fill="none" stroke="#AACFE0" stroke-width="3.5"/><path d="M737,491 L760.8,516.3 L1198,1075" fill="none" stroke="#B3CCD6" stroke-width="4.5"/><path d="M737,491 L760.8,516.3 L1198,1075" fill="none" stroke="#F2F9FB" stroke-width="2.4" stroke-dasharray="7,2"/><path d="M650,927 L594,776 Q613,735 643,764 L699.5,883 Q706,900 690,914 L650,927 Z" fill="none" stroke="#CFCBCE" stroke-width="17" stroke-linejoin="round"/><path d="M380,1027 L686,919" fill="none" stroke="#CFCBCE" stroke-width="17" stroke-linejoin="round"/><path d="M650,927 L594,776 Q613,735 643,764 L699.5,883 Q706,900 690,914 L650,927 Z" fill="none" stroke="#FFFFFF" stroke-width="15" stroke-linejoin="round"/><path d="M380,1027 L686,919" fill="none" stroke="#FFFFFF" stroke-width="15" stroke-linejoin="round"/><path d="M401,1014 L673,917 L681,906 L617,768" fill="none" stroke="#111" stroke-width="1.6"/><path d="M401,984 L638,905" fill="none" stroke="#8E8E92" stroke-width="1.6" stroke-dasharray="1.5,6" stroke-linecap="round"/><path d="M401,1048 L680,952 Q712,938 716,905 L660,776" fill="none" stroke="#8E8E92" stroke-width="1.6" stroke-dasharray="1.5,6" stroke-linecap="round"/><path d="M600,807 L644,901" fill="none" stroke="#8E8E92" stroke-width="1.6" stroke-dasharray="1.5,6" stroke-linecap="round"/><polygon points="752.4,930.8 792,967.6 778,980 785,988 773,1000 766,993 752.4,1008.6 714,970.4" fill="#D9D0CF" stroke="#C6BAB8" stroke-width="1"/><path d="M867,451 L917.7,782.7 L962.7,1007.7 L994.3,1160 L1012.6,1276" fill="none" stroke="#2B3A9E" stroke-width="1.8" stroke-dasharray="4,3"/><path d="M980,451 L1059,870 L1062,1017" fill="none" stroke="#E88C8F" stroke-width="1.5" stroke-dasharray="4,4"/><path d="M976,451 L1032,797" fill="none" stroke="#8E8E92" stroke-width="1.4" stroke-dasharray="2,4"/><path d="M1271.6,908 L1430,877" fill="none" stroke="#E88C8F" stroke-width="1.5" stroke-dasharray="4,4"/><path d="M1100,1000 L1430,886" fill="none" stroke="#E88C8F" stroke-width="1.5" stroke-dasharray="4,4"/><path d="M1085,1098 L1430,967.6" fill="none" stroke="#E88C8F" stroke-width="1.5" stroke-dasharray="4,4"/><path d="M401.4,1223.7 L920,1030 L992,1004" fill="none" stroke="#E88C8F" stroke-width="1.5" stroke-dasharray="4,4"/><path d="M1079,1086 L1124.5,1254.8 L1130,1276" fill="none" stroke="#E88C8F" stroke-width="1.5" stroke-dasharray="4,4"/><path d="M975,1158 L990,1276" fill="none" stroke="#E88C8F" stroke-width="1.5" stroke-dasharray="4,4"/><path d="M1113,964.7 L1164,888.3 L1225,850" fill="none" stroke="#E88C8F" stroke-width="1.5" stroke-dasharray="4,4"/><path d="M1351,967.6 L1430,1035.5" fill="none" stroke="#E88C8F" stroke-width="1.5" stroke-dasharray="4,4"/><path d="M915,1030 L990,1004" fill="none" stroke="#E88C8F" stroke-width="1.5" stroke-dasharray="4,4"/><path d="M884,451 L940,777 L970,1030" fill="none" stroke="#8E8E92" stroke-width="1.5" stroke-dasharray="2,4"/><path d="M1110,1130 L1132,1276" fill="none" stroke="#5C9E68" stroke-width="1.6" stroke-dasharray="2,5"/><polygon points="403,1262 442.5,1255 533,1229.4 562.7,1202.5 1000,1041.5 1012,1114 860,1161.7 560,1276 403,1276" fill="#9C9B6E" stroke="#9C9B6E" stroke-width="2.8" stroke-linejoin="round"/><polygon points="1055,1020 1251.8,942 1319.7,946.3 1430,911 1430,939.3 1328.3,973.2 1294.3,1010 1074.5,1088.4" fill="#9C9B6E" stroke="#9C9B6E" stroke-width="2.8" stroke-linejoin="round"/><polygon points="920,451 949,451 1006,817 1040.4,881.9 1062,1020 1074.5,1088.4 1012,1114 1000,1041.5 972.5,887.5 979,817" fill="#9C9B6E" stroke="#9C9B6E" stroke-width="2.8" stroke-linejoin="round"/><polygon points="1012,1110 1074.5,1086 1106,1276 1040,1276" fill="#9C9B6E" stroke="#9C9B6E" stroke-width="2.8" stroke-linejoin="round"/><polygon points="403,1262 442.5,1255 533,1229.4 562.7,1202.5 1000,1041.5 1012,1114 860,1161.7 560,1276 403,1276" fill="#F7F8BE"/><polygon points="1055,1020 1251.8,942 1319.7,946.3 1430,911 1430,939.3 1328.3,973.2 1294.3,1010 1074.5,1088.4" fill="#F7F8BE"/><polygon points="920,451 949,451 1006,817 1040.4,881.9 1062,1020 1074.5,1088.4 1012,1114 1000,1041.5 972.5,887.5 979,817" fill="#F7F8BE"/><polygon points="1012,1110 1074.5,1086 1106,1276 1040,1276" fill="#F7F8BE"/><polygon points="1000.8,868.7 1012,891.3 1035.7,1025.3 1029,1031 999.8,881.9" fill="#F4EDED" stroke="#9C9B6E" stroke-width="1.4" stroke-linejoin="round"/><polygon points="569.8,1230.8 1004.4,1070 1006.6,1085 572.7,1233.6" fill="#F4EDED" stroke="#9C9B6E" stroke-width="1.4" stroke-linejoin="round"/><polygon points="1067.8,1045.4 1257.5,967.6 1288.6,971.8 1274.5,984.5 1069.3,1061" fill="#F4EDED" stroke="#9C9B6E" stroke-width="1.4" stroke-linejoin="round"/><polygon points="1036.8,1103.5 1048.6,1099.2 1072,1276 1062,1276" fill="#F4EDED" stroke="#9C9B6E" stroke-width="1.4" stroke-linejoin="round"/><path d="M1040,875 L1198,1075" fill="none" stroke="#A8CEDF" stroke-width="2.6" opacity="0.75"/><path d="M1040,875 L1198,1075" fill="none" stroke="#F0F7FA" stroke-width="1" stroke-dasharray="5,3" opacity="0.8"/><path d="M930.5,451 L984.7,780 L1031,1058 L1068,1255 L1072,1276" fill="none" stroke="#141414" stroke-width="1.8"/><path d="M403,1276 L1430,920" fill="none" stroke="#141414" stroke-width="1.8"/><path d="M1000,1042 L1003,1048 M1012,1110 L1017,1115" stroke="none"/><g fill="none" stroke="#86AE7C" stroke-width="1"><ellipse cx="432.0" cy="458.8" rx="2.6" ry="3.4"/><ellipse cx="438.0" cy="457.8" rx="2.6" ry="3.4"/><path d="M432.0,461.8 L432.0,466.8 M438.0,460.8 L438.0,466.8"/></g><g fill="none" stroke="#86AE7C" stroke-width="1"><ellipse cx="461.3" cy="484.0" rx="2.6" ry="3.4"/><ellipse cx="467.3" cy="483.0" rx="2.6" ry="3.4"/><path d="M461.3,487.0 L461.3,492.0 M467.3,486.0 L467.3,492.0"/></g><g fill="none" stroke="#86AE7C" stroke-width="1"><ellipse cx="514.5" cy="477.0" rx="2.6" ry="3.4"/><ellipse cx="520.5" cy="476.0" rx="2.6" ry="3.4"/><path d="M514.5,480.0 L514.5,485.0 M520.5,479.0 L520.5,485.0"/></g><g fill="none" stroke="#86AE7C" stroke-width="1"><ellipse cx="564.8" cy="468.6" rx="2.6" ry="3.4"/><ellipse cx="570.8" cy="467.6" rx="2.6" ry="3.4"/><path d="M564.8,471.6 L564.8,476.6 M570.8,470.6 L570.8,476.6"/></g><g fill="none" stroke="#86AE7C" stroke-width="1"><ellipse cx="599.8" cy="491.0" rx="2.6" ry="3.4"/><ellipse cx="605.8" cy="490.0" rx="2.6" ry="3.4"/><path d="M599.8,494.0 L599.8,499.0 M605.8,493.0 L605.8,499.0"/></g><g fill="none" stroke="#86AE7C" stroke-width="1"><ellipse cx="637.6" cy="468.6" rx="2.6" ry="3.4"/><ellipse cx="643.6" cy="467.6" rx="2.6" ry="3.4"/><path d="M637.6,471.6 L637.6,476.6 M643.6,470.6 L643.6,476.6"/></g><g fill="none" stroke="#86AE7C" stroke-width="1"><ellipse cx="686.5" cy="461.6" rx="2.6" ry="3.4"/><ellipse cx="692.5" cy="460.6" rx="2.6" ry="3.4"/><path d="M686.5,464.6 L686.5,469.6 M692.5,463.6 L692.5,469.6"/></g><g fill="none" stroke="#86AE7C" stroke-width="1"><ellipse cx="721.5" cy="478.4" rx="2.6" ry="3.4"/><ellipse cx="727.5" cy="477.4" rx="2.6" ry="3.4"/><path d="M721.5,481.4 L721.5,486.4 M727.5,480.4 L727.5,486.4"/></g><g fill="none" stroke="#86AE7C" stroke-width="1"><ellipse cx="774.6" cy="458.8" rx="2.6" ry="3.4"/><ellipse cx="780.6" cy="457.8" rx="2.6" ry="3.4"/><path d="M774.6,461.8 L774.6,466.8 M780.6,460.8 L780.6,466.8"/></g><g fill="none" stroke="#86AE7C" stroke-width="1"><ellipse cx="801.2" cy="484.0" rx="2.6" ry="3.4"/><ellipse cx="807.2" cy="483.0" rx="2.6" ry="3.4"/><path d="M801.2,487.0 L801.2,492.0 M807.2,486.0 L807.2,492.0"/></g><g fill="none" stroke="#86AE7C" stroke-width="1"><ellipse cx="855.7" cy="477.0" rx="2.6" ry="3.4"/><ellipse cx="861.7" cy="476.0" rx="2.6" ry="3.4"/><path d="M855.7,480.0 L855.7,485.0 M861.7,479.0 L861.7,485.0"/></g><g fill="none" stroke="#86AE7C" stroke-width="1"><ellipse cx="486.5" cy="510.5" rx="2.6" ry="3.4"/><ellipse cx="492.5" cy="509.5" rx="2.6" ry="3.4"/><path d="M486.5,513.5 L486.5,518.5 M492.5,512.5 L492.5,518.5"/></g><g fill="none" stroke="#86AE7C" stroke-width="1"><ellipse cx="520.1" cy="524.5" rx="2.6" ry="3.4"/><ellipse cx="526.1" cy="523.5" rx="2.6" ry="3.4"/><path d="M520.1,527.5 L520.1,532.5 M526.1,526.5 L526.1,532.5"/></g><g fill="none" stroke="#86AE7C" stroke-width="1"><ellipse cx="571.8" cy="516.1" rx="2.6" ry="3.4"/><ellipse cx="577.8" cy="515.1" rx="2.6" ry="3.4"/><path d="M571.8,519.1 L571.8,524.1 M577.8,518.1 L577.8,524.1"/></g><g fill="none" stroke="#86AE7C" stroke-width="1"><ellipse cx="632.0" cy="518.9" rx="2.6" ry="3.4"/><ellipse cx="638.0" cy="517.9" rx="2.6" ry="3.4"/><path d="M632.0,521.9 L632.0,526.9 M638.0,520.9 L638.0,526.9"/></g><g fill="none" stroke="#86AE7C" stroke-width="1"><ellipse cx="679.5" cy="506.3" rx="2.6" ry="3.4"/><ellipse cx="685.5" cy="505.3" rx="2.6" ry="3.4"/><path d="M679.5,509.3 L679.5,514.3 M685.5,508.3 L685.5,514.3"/></g><g fill="none" stroke="#86AE7C" stroke-width="1"><ellipse cx="718.7" cy="517.5" rx="2.6" ry="3.4"/><ellipse cx="724.7" cy="516.5" rx="2.6" ry="3.4"/><path d="M718.7,520.5 L718.7,525.5 M724.7,519.5 L724.7,525.5"/></g><g fill="none" stroke="#86AE7C" stroke-width="1"><ellipse cx="769.0" cy="507.7" rx="2.6" ry="3.4"/><ellipse cx="775.0" cy="506.7" rx="2.6" ry="3.4"/><path d="M769.0,510.7 L769.0,515.7 M775.0,509.7 L775.0,515.7"/></g><g fill="none" stroke="#86AE7C" stroke-width="1"><ellipse cx="827.8" cy="513.3" rx="2.6" ry="3.4"/><ellipse cx="833.8" cy="512.3" rx="2.6" ry="3.4"/><path d="M827.8,516.3 L827.8,521.3 M833.8,515.3 L833.8,521.3"/></g><g fill="none" stroke="#86AE7C" stroke-width="1"><ellipse cx="862.7" cy="524.5" rx="2.6" ry="3.4"/><ellipse cx="868.7" cy="523.5" rx="2.6" ry="3.4"/><path d="M862.7,527.5 L862.7,532.5 M868.7,526.5 L868.7,532.5"/></g><g fill="none" stroke="#86AE7C" stroke-width="1"><ellipse cx="411.0" cy="545.5" rx="2.6" ry="3.4"/><ellipse cx="417.0" cy="544.5" rx="2.6" ry="3.4"/><path d="M411.0,548.5 L411.0,553.5 M417.0,547.5 L417.0,553.5"/></g><g fill="none" stroke="#86AE7C" stroke-width="1"><ellipse cx="496.3" cy="559.5" rx="2.6" ry="3.4"/><ellipse cx="502.3" cy="558.5" rx="2.6" ry="3.4"/><path d="M496.3,562.5 L496.3,567.5 M502.3,561.5 L502.3,567.5"/></g><g fill="none" stroke="#86AE7C" stroke-width="1"><ellipse cx="555.0" cy="553.9" rx="2.6" ry="3.4"/><ellipse cx="561.0" cy="552.9" rx="2.6" ry="3.4"/><path d="M555.0,556.9 L555.0,561.9 M561.0,555.9 L561.0,561.9"/></g><g fill="none" stroke="#86AE7C" stroke-width="1"><ellipse cx="665.5" cy="544.1" rx="2.6" ry="3.4"/><ellipse cx="671.5" cy="543.1" rx="2.6" ry="3.4"/><path d="M665.5,547.1 L665.5,552.1 M671.5,546.1 L671.5,552.1"/></g><g fill="none" stroke="#86AE7C" stroke-width="1"><ellipse cx="755.0" cy="546.9" rx="2.6" ry="3.4"/><ellipse cx="761.0" cy="545.9" rx="2.6" ry="3.4"/><path d="M755.0,549.9 L755.0,554.9 M761.0,548.9 L761.0,554.9"/></g><g fill="none" stroke="#86AE7C" stroke-width="1"><ellipse cx="798.4" cy="548.3" rx="2.6" ry="3.4"/><ellipse cx="804.4" cy="547.3" rx="2.6" ry="3.4"/><path d="M798.4,551.3 L798.4,556.3 M804.4,550.3 L804.4,556.3"/></g><g fill="none" stroke="#86AE7C" stroke-width="1"><ellipse cx="837.6" cy="559.5" rx="2.6" ry="3.4"/><ellipse cx="843.6" cy="558.5" rx="2.6" ry="3.4"/><path d="M837.6,562.5 L837.6,567.5 M843.6,561.5 L843.6,567.5"/></g><g fill="none" stroke="#86AE7C" stroke-width="1"><ellipse cx="868.3" cy="586.1" rx="2.6" ry="3.4"/><ellipse cx="874.3" cy="585.1" rx="2.6" ry="3.4"/><path d="M868.3,589.1 L868.3,594.1 M874.3,588.1 L874.3,594.1"/></g><g fill="none" stroke="#86AE7C" stroke-width="1"><ellipse cx="813.8" cy="595.8" rx="2.6" ry="3.4"/><ellipse cx="819.8" cy="594.8" rx="2.6" ry="3.4"/><path d="M813.8,598.8 L813.8,603.8 M819.8,597.8 L819.8,603.8"/></g><g fill="none" stroke="#86AE7C" stroke-width="1"><ellipse cx="769.0" cy="587.5" rx="2.6" ry="3.4"/><ellipse cx="775.0" cy="586.5" rx="2.6" ry="3.4"/><path d="M769.0,590.5 L769.0,595.5 M775.0,589.5 L775.0,595.5"/></g><g fill="none" stroke="#86AE7C" stroke-width="1"><ellipse cx="844.6" cy="621.0" rx="2.6" ry="3.4"/><ellipse cx="850.6" cy="620.0" rx="2.6" ry="3.4"/><path d="M844.6,624.0 L844.6,629.0 M850.6,623.0 L850.6,629.0"/></g><g fill="none" stroke="#86AE7C" stroke-width="1"><ellipse cx="886.5" cy="637.8" rx="2.6" ry="3.4"/><ellipse cx="892.5" cy="636.8" rx="2.6" ry="3.4"/><path d="M886.5,640.8 L886.5,645.8 M892.5,639.8 L892.5,645.8"/></g><g fill="none" stroke="#86AE7C" stroke-width="1"><ellipse cx="816.6" cy="651.8" rx="2.6" ry="3.4"/><ellipse cx="822.6" cy="650.8" rx="2.6" ry="3.4"/><path d="M816.6,654.8 L816.6,659.8 M822.6,653.8 L822.6,659.8"/></g><g fill="none" stroke="#86AE7C" stroke-width="1"><ellipse cx="852.9" cy="665.8" rx="2.6" ry="3.4"/><ellipse cx="858.9" cy="664.8" rx="2.6" ry="3.4"/><path d="M852.9,668.8 L852.9,673.8 M858.9,667.8 L858.9,673.8"/></g><g fill="none" stroke="#86AE7C" stroke-width="1"><ellipse cx="889.3" cy="730.1" rx="2.6" ry="3.4"/><ellipse cx="895.3" cy="729.1" rx="2.6" ry="3.4"/><path d="M889.3,733.1 L889.3,738.1 M895.3,732.1 L895.3,738.1"/></g><g fill="none" stroke="#86AE7C" stroke-width="1"><ellipse cx="858.5" cy="704.9" rx="2.6" ry="3.4"/><ellipse cx="864.5" cy="703.9" rx="2.6" ry="3.4"/><path d="M858.5,707.9 L858.5,712.9 M864.5,706.9 L864.5,712.9"/></g><text x="944.7" y="813" font-family="Liberation Sans" font-size="13.5" fill="#707074" font-weight="normal" text-anchor="middle" >9478</text><text x="944.7" y="844" font-family="Liberation Sans" font-size="13.5" fill="#707074" font-weight="normal" text-anchor="middle" >9480</text><text x="1033" y="797" font-family="Liberation Sans" font-size="13.5" fill="#707074" font-weight="normal" text-anchor="middle" >9425</text><text x="985.3" y="1053" font-family="Liberation Sans" font-size="13.5" fill="#707074" font-weight="normal" text-anchor="middle" >1548</text><text x="1100.6" y="966" font-family="Liberation Sans" font-size="13.5" fill="#707074" font-weight="normal" text-anchor="middle" >1550</text><text x="1329.7" y="916" font-family="Liberation Sans" font-size="13.5" fill="#707074" font-weight="normal" text-anchor="middle" >1562</text><text x="1359.5" y="1001" font-family="Liberation Sans" font-size="13.5" fill="#707074" font-weight="normal" text-anchor="middle" >1555</text><text x="1111.9" y="1131" font-family="Liberation Sans" font-size="13.5" fill="#707074" font-weight="normal" text-anchor="middle" >9225</text><text x="988.1" y="1176" font-family="Liberation Sans" font-size="13.5" fill="#707074" font-weight="normal" text-anchor="middle" >9240</text><text x="473.2" y="1230" font-family="Liberation Sans" font-size="13.5" fill="#707074" font-weight="normal" text-anchor="middle" >1444</text><text x="708.4" y="1228" font-family="Liberation Sans" font-size="13.5" fill="#707074" font-weight="normal" text-anchor="middle" >1455</text><text x="595.8" y="803" font-family="Liberation Sans" font-size="13.5" fill="#707074" font-weight="normal" text-anchor="middle" >35</text><text x="908" y="640" font-family="Liberation Sans" font-size="14" fill="#1a1a1a" font-weight="normal" text-anchor="middle" transform="rotate(80.5 908 640)" >Lake to Lake Route</text><text x="1030" y="926" font-family="Liberation Sans" font-size="14.5" fill="#1a1a1a" font-weight="normal" text-anchor="middle" transform="rotate(80 1030 926)" >Leslie Street</text><text x="927" y="436" font-family="Liberation Sans" font-size="14.5" fill="#1a1a1a" font-weight="normal" text-anchor="middle" transform="rotate(80 927 436)" >Leslie Street</text><text x="1196" y="1032" font-family="Liberation Sans" font-size="14.5" fill="#1a1a1a" font-weight="normal" text-anchor="middle" transform="rotate(-20 1196 1032)" >16th Avenue</text><text x="929" y="1088" font-family="Liberation Sans" font-size="14.5" fill="#1a1a1a" font-weight="normal" text-anchor="middle" transform="rotate(-20 929 1088)" >16th Aver</text><text x="782.7" y="1186" font-family="Liberation Sans" font-size="14.5" fill="#1a1a1a" font-weight="normal" text-anchor="middle" transform="rotate(-20 782.7 1186)" >16th Avenue</text><text x="490" y="992" font-family="Liberation Sans" font-size="14" fill="#1a1a1a" font-weight="normal" text-anchor="middle" transform="rotate(-20 490 992)" >Horner Court</text><text x="1016" y="1237" font-family="Liberation Sans" font-size="14" fill="#1a1a1a" font-weight="normal" text-anchor="middle" transform="rotate(80 1016 1237)" >Lake to</text><text x="1041.5" y="1237" font-family="Liberation Sans" font-size="14" fill="#1a1a1a" font-weight="normal" text-anchor="middle" transform="rotate(80 1041.5 1237)" >Leslie St</text><text x="614" y="763" font-family="Liberation Sans" font-size="13.5" fill="#1a1a1a" font-weight="normal" text-anchor="middle" transform="rotate(-24 614 763)" >Horner</text><text x="648" y="782" font-family="Liberation Sans" font-size="13.5" fill="#1a1a1a" font-weight="normal" text-anchor="middle" transform="rotate(62 648 782)" >Court</text><text x="948.7" y="1004" font-family="Liberation Sans" font-size="14" fill="#3B7FD0" font-weight="normal" text-anchor="middle" >Leslie Street /</text><text x="948.7" y="1020" font-family="Liberation Sans" font-size="14" fill="#3B7FD0" font-weight="normal" text-anchor="middle" >16th Avenue</text><text x="1126" y="991" font-family="Liberation Sans" font-size="14" fill="#3B7FD0" font-weight="normal" text-anchor="middle" >16th Avenue /</text><text x="1126" y="1007" font-family="Liberation Sans" font-size="14" fill="#3B7FD0" font-weight="normal" text-anchor="middle" >Leslie Street</text><text x="1217.6" y="877" font-family="Liberation Sans" font-size="14" fill="#C77A1E" font-weight="normal" text-anchor="middle" >Eggsmart</text><text x="1322.4" y="618" font-family="Liberation Sans" font-size="20" fill="#8DBBE6" font-weight="normal" text-anchor="middle" >P</text><text x="1129" y="789" font-family="Liberation Sans" font-size="20" fill="#8DBBE6" font-weight="normal" text-anchor="middle" >P</text><g fill="#D0802A"><rect x="1210" y="845" width="2" height="18"/><rect x="1207" y="845" width="1.5" height="7"/><rect x="1213.5" y="845" width="1.5" height="7"/><ellipse cx="1222" cy="850" rx="3" ry="5"/><rect x="1221" y="853" width="2" height="10"/></g><g><rect x="944" y="975" width="10" height="12" rx="2" fill="none" stroke="#3B86D6" stroke-width="2"/><rect x="946" y="978" width="6" height="3" fill="#3B86D6"/><rect x="945" y="986" width="2" height="2" fill="#3B86D6"/><rect x="951" y="986" width="2" height="2" fill="#3B86D6"/></g><g><rect x="1120" y="961" width="10" height="12" rx="2" fill="none" stroke="#3B86D6" stroke-width="2"/><rect x="1122" y="964" width="6" height="3" fill="#3B86D6"/><rect x="1121" y="972" width="2" height="2" fill="#3B86D6"/><rect x="1127" y="972" width="2" height="2" fill="#3B86D6"/></g><g><rect x="929" y="1147" width="10" height="12" rx="2" fill="none" stroke="#3B86D6" stroke-width="2"/><rect x="931" y="1150" width="6" height="3" fill="#3B86D6"/><rect x="930" y="1158" width="2" height="2" fill="#3B86D6"/><rect x="936" y="1158" width="2" height="2" fill="#3B86D6"/></g><g><rect x="1108" y="1254" width="10" height="12" rx="2" fill="none" stroke="#3B86D6" stroke-width="2"/><rect x="1110" y="1257" width="6" height="3" fill="#3B86D6"/><rect x="1109" y="1265" width="2" height="2" fill="#3B86D6"/><rect x="1115" y="1265" width="2" height="2" fill="#3B86D6"/></g><g><rect x="908" y="1257" width="10" height="12" rx="2" fill="none" stroke="#3B86D6" stroke-width="2"/><rect x="910" y="1260" width="6" height="3" fill="#3B86D6"/><rect x="909" y="1268" width="2" height="2" fill="#3B86D6"/><rect x="915" y="1268" width="2" height="2" fill="#3B86D6"/></g><rect x="1185" y="964" width="28" height="26" rx="3" fill="#F6F3DA" stroke="#B9B59A" stroke-width="1.2"/><text x="1199" y="983" font-family="Liberation Sans" font-size="16" fill="#222" font-weight="normal" text-anchor="middle" >73</text><rect x="760" y="1125" width="28" height="26" rx="3" fill="#F6F3DA" stroke="#B9B59A" stroke-width="1.2"/><text x="774" y="1144" font-family="Liberation Sans" font-size="16" fill="#222" font-weight="normal" text-anchor="middle" >73</text><rect x="1061" y="1165" width="28" height="26" rx="3" fill="#F6F3DA" stroke="#B9B59A" stroke-width="1.2"/><text x="1075" y="1184" font-family="Liberation Sans" font-size="16" fill="#222" font-weight="normal" text-anchor="middle" >12</text><g fill="#F7F8BE" stroke="#35352a" stroke-width="1.25"><path d="M1012.4,1045 L1012.4,1055 M1017.6,1045 L1017.6,1055"/><circle cx="1015" cy="1045" r="2.6"/><circle cx="1015" cy="1050" r="2.6"/><circle cx="1015" cy="1055" r="2.6"/></g><g fill="#F7F8BE" stroke="#35352a" stroke-width="1.25"><path d="M1048.4,1034 L1048.4,1044 M1053.6,1034 L1053.6,1044"/><circle cx="1051" cy="1034" r="2.6"/><circle cx="1051" cy="1039" r="2.6"/><circle cx="1051" cy="1044" r="2.6"/></g><g fill="#F7F8BE" stroke="#35352a" stroke-width="1.25"><path d="M1019.4,1091 L1019.4,1101 M1024.6,1091 L1024.6,1101"/><circle cx="1022" cy="1091" r="2.6"/><circle cx="1022" cy="1096" r="2.6"/><circle cx="1022" cy="1101" r="2.6"/></g><g fill="#F7F8BE" stroke="#35352a" stroke-width="1.25"><path d="M1056.4,1076 L1056.4,1086 M1061.6,1076 L1061.6,1086"/><circle cx="1059" cy="1076" r="2.6"/><circle cx="1059" cy="1081" r="2.6"/><circle cx="1059" cy="1086" r="2.6"/></g><g transform="translate(994,933) rotate(80)"><path d="M-7,0 L5,0" stroke="#2c2c20" stroke-width="1.4"/><path d="M7,0 L2,-3.5 L2,3.5 Z" fill="#2c2c20"/></g><g transform="translate(1034,873) rotate(-100)"><path d="M-7,0 L5,0" stroke="#2c2c20" stroke-width="1.4"/><path d="M7,0 L2,-3.5 L2,3.5 Z" fill="#2c2c20"/></g><g transform="translate(1224,967) rotate(160)"><path d="M-7,0 L5,0" stroke="#2c2c20" stroke-width="1.4"/><path d="M7,0 L2,-3.5 L2,3.5 Z" fill="#2c2c20"/></g><g transform="translate(1186,1049) rotate(-20)"><path d="M-7,0 L5,0" stroke="#2c2c20" stroke-width="1.4"/><path d="M7,0 L2,-3.5 L2,3.5 Z" fill="#2c2c20"/></g><g transform="translate(887,1097) rotate(160)"><path d="M-7,0 L5,0" stroke="#2c2c20" stroke-width="1.4"/><path d="M7,0 L2,-3.5 L2,3.5 Z" fill="#2c2c20"/></g><g transform="translate(681,1175) rotate(160)"><path d="M-7,0 L5,0" stroke="#2c2c20" stroke-width="1.4"/><path d="M7,0 L2,-3.5 L2,3.5 Z" fill="#2c2c20"/></g><g transform="translate(884,1142) rotate(-20)"><path d="M-7,0 L5,0" stroke="#2c2c20" stroke-width="1.4"/><path d="M7,0 L2,-3.5 L2,3.5 Z" fill="#2c2c20"/></g><g transform="translate(661,1222) rotate(-20)"><path d="M-7,0 L5,0" stroke="#2c2c20" stroke-width="1.4"/><path d="M7,0 L2,-3.5 L2,3.5 Z" fill="#2c2c20"/></g><g transform="translate(1037,1213) rotate(80)"><path d="M-7,0 L5,0" stroke="#2c2c20" stroke-width="1.4"/><path d="M7,0 L2,-3.5 L2,3.5 Z" fill="#2c2c20"/></g><circle cx="1031.4" cy="1062" r="6.5" fill="#111"/><circle cx="1031.4" cy="1058" r="6.5" fill="#27C9D0" stroke="#0A8C94" stroke-width="1.5"/><circle cx="1031.4" cy="1058" r="2.5" fill="#0E6E74"/><path d="M905,1180 Q912,1170 920,1178" stroke="#7A5020" stroke-width="3" fill="none"/><rect x="422.5" y="472.2" width="43.5" height="85.6" fill="#000" opacity="0.12"/><rect x="422.5" y="470.7" width="43.5" height="85.6" fill="#fff" stroke="#E3E3E3" stroke-width="1"/><line x1="422.5" y1="513.5" x2="466" y2="513.5" stroke="#E6E6E6" stroke-width="1"/><rect x="422.5" y="571.0" width="43.5" height="42.8" fill="#000" opacity="0.12"/><rect x="422.5" y="569.5" width="43.5" height="42.8" fill="#fff" stroke="#E3E3E3" stroke-width="1"/><rect x="422.5" y="626.9" width="43.5" height="42.8" fill="#000" opacity="0.12"/><rect x="422.5" y="625.4" width="43.5" height="42.8" fill="#fff" stroke="#E3E3E3" stroke-width="1"/><rect x="1368.3" y="472.3" width="42.5" height="43" fill="#000" opacity="0.12"/><rect x="1368.3" y="470.8" width="42.5" height="43" fill="#fff" stroke="#E3E3E3" stroke-width="1"/><rect x="1368.3" y="528.1" width="42.5" height="43" fill="#000" opacity="0.12"/><rect x="1368.3" y="526.6" width="42.5" height="43" fill="#fff" stroke="#E3E3E3" stroke-width="1"/><rect x="1368.3" y="583.4" width="42.5" height="85" fill="#000" opacity="0.12"/><rect x="1368.3" y="581.9" width="42.5" height="85" fill="#fff" stroke="#E3E3E3" stroke-width="1"/><line x1="1368.3" y1="624.5" x2="1410.8" y2="624.5" stroke="#E6E6E6" stroke-width="1"/><circle cx="442" cy="490" r="8" fill="none" stroke="#555" stroke-width="1.8"/><path d="M448,496 L454,502" fill="none" stroke="#555" stroke-width="1.8"/><path d="M438,490 L446,490 M442,486 L442,494" fill="none" stroke="#555" stroke-width="1.8"/><circle cx="442" cy="533" r="8" fill="none" stroke="#555" stroke-width="1.8"/><path d="M448,539 L454,545" fill="none" stroke="#555" stroke-width="1.8"/><path d="M438,533 L446,533" fill="none" stroke="#555" stroke-width="1.8"/><rect x="434" y="581" width="20" height="20" fill="none" stroke="#555" stroke-width="1.5"/><path d="M437,598 Q440,590 445,592 Q448,586 452,584" fill="none" stroke="#555" stroke-width="1.4"/><path d="M444,634 L451.5,658 L444,652 L436.5,658 Z" fill="#555"/><path d="M1379,491 L1389.5,485 L1400,491 L1389.5,497 Z M1379,495 L1389.5,501 L1400,495 M1379,499 L1389.5,505 L1400,499" fill="none" stroke="#555" stroke-width="1.4" stroke-linejoin="round"/><rect x="1381" y="545" width="17" height="10" rx="2" fill="none" stroke="#555" stroke-width="1.8"/><rect x="1384" y="538" width="11" height="6" fill="none" stroke="#555" stroke-width="1.8"/><rect x="1384" y="551" width="11" height="7" fill="#fff" stroke="#555" stroke-width="1.6"/><path d="M1379,599.5 L1400,599.5 M1379,597.5 L1379,601.5 M1400,597.5 L1400,601.5" stroke="#555" stroke-width="1.4"/><rect x="1379" y="603" width="21" height="7.5" fill="#8a8a8a" stroke="#555" stroke-width="1.3"/><path d="M1381,637.5 L1398.5,637.5" stroke="#555" stroke-width="1.6"/><path d="M1383,640 L1384,656 L1395.5,656 L1396.5,640 Z" fill="#fff" stroke="#555" stroke-width="1.5"/><rect x="1386.5" y="643" width="6.5" height="10" fill="#9a9a9a"/><rect x="403" y="1255" width="1027" height="21" fill="#ffffff" opacity="0.78"/><text x="409" y="1272" font-family="Liberation Sans" font-size="16.1" fill="#333">Map data © OpenStreetMap contributors, CC-BY-SA | TNS</text><text x="1424" y="1272" font-family="Liberation Sans" font-size="16.1" fill="#333" text-anchor="end">Powered by <tspan fill="#E0B030">Esri</tspan></text></svg>
</body></html>
